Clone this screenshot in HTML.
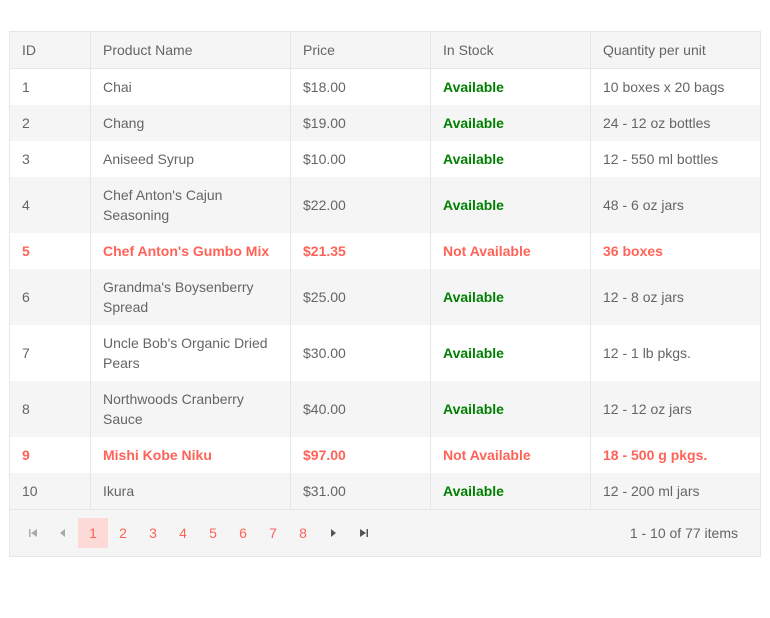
<!DOCTYPE html>
<html><head><style>
body{margin:0;background:#fff;font-family:"Liberation Sans",sans-serif;font-size:14px;color:#656565}
.g{position:absolute;left:9px;top:31px;width:750px;border:1px solid #e6e6e6}
table{border-collapse:collapse;width:750px;table-layout:fixed}
td,th{padding:0 12px 0 12px;border-left:1px solid #e6e6e6;text-align:left;font-weight:normal;line-height:20px}
td+td,th+th{padding-left:12.5px}
td:first-child,th:first-child{border-left:none}
th{height:36px;background:#f5f5f5;border-bottom:1px solid #e6e6e6}
tr.a td{background:#fff}tr.b td{background:#f5f5f5}
.ok{color:#008000;font-weight:bold}
tr.r td{color:#ff6358;font-weight:bold}
.p{height:46px;background:#f5f5f5;border-top:1px solid #e6e6e6;position:relative}
.p span{position:absolute;top:8px;width:30px;height:30px;line-height:30px;text-align:center;color:#ff6358}
.p svg{position:absolute;top:19px}
.p .s{background:#fbdad7}
.info{position:absolute;right:22px;top:15px}
</style></head><body>
<div class="g">
<table>
<colgroup><col style="width:80px"><col style="width:200px"><col style="width:140px"><col style="width:160px"><col style="width:170px"></colgroup>
<tr><th>ID</th><th>Product Name</th><th>Price</th><th>In Stock</th><th>Quantity per unit</th></tr>
<tr class="a" style="height:36px"><td>1</td><td>Chai</td><td>$18.00</td><td class="ok">Available</td><td>10 boxes x 20 bags</td></tr>
<tr class="b" style="height:36px"><td>2</td><td>Chang</td><td>$19.00</td><td class="ok">Available</td><td>24 - 12 oz bottles</td></tr>
<tr class="a" style="height:36px"><td>3</td><td>Aniseed Syrup</td><td>$10.00</td><td class="ok">Available</td><td>12 - 550 ml bottles</td></tr>
<tr class="b" style="height:56px"><td>4</td><td>Chef Anton's Cajun Seasoning</td><td>$22.00</td><td class="ok">Available</td><td>48 - 6 oz jars</td></tr>
<tr class="a r" style="height:36px"><td>5</td><td>Chef Anton's Gumbo Mix</td><td>$21.35</td><td>Not Available</td><td>36 boxes</td></tr>
<tr class="b" style="height:56px"><td>6</td><td>Grandma's Boysenberry Spread</td><td>$25.00</td><td class="ok">Available</td><td>12 - 8 oz jars</td></tr>
<tr class="a" style="height:56px"><td>7</td><td>Uncle Bob's Organic Dried Pears</td><td>$30.00</td><td class="ok">Available</td><td>12 - 1 lb pkgs.</td></tr>
<tr class="b" style="height:56px"><td>8</td><td>Northwoods Cranberry Sauce</td><td>$40.00</td><td class="ok">Available</td><td>12 - 12 oz jars</td></tr>
<tr class="a r" style="height:36px"><td>9</td><td>Mishi Kobe Niku</td><td>$97.00</td><td>Not Available</td><td>18 - 500 g pkgs.</td></tr>
<tr class="b" style="height:36px"><td>10</td><td>Ikura</td><td>$31.00</td><td class="ok">Available</td><td>12 - 200 ml jars</td></tr>
</table>
<div class="p">
<svg style="left:19px" width="8" height="8" viewBox="0 0 8 8"><rect x="0" y="0" width="1.5" height="8" fill="#aaa"/><path d="M8 0L2 4L8 8Z" fill="#aaa"/></svg>
<svg style="left:50px" width="5" height="8" viewBox="0 0 5 8"><path d="M5 0L0 4L5 8Z" fill="#aaa"/></svg>
<span class="s" style="left:68px">1</span>
<span style="left:98px">2</span>
<span style="left:128px">3</span>
<span style="left:158px">4</span>
<span style="left:188px">5</span>
<span style="left:218px">6</span>
<span style="left:248px">7</span>
<span style="left:278px">8</span>
<svg style="left:321px" width="5" height="8" viewBox="0 0 5 8"><path d="M0 0L5 4L0 8Z" fill="#555"/></svg>
<svg style="left:350px" width="8" height="8" viewBox="0 0 8 8"><path d="M0 0L6 4L0 8Z" fill="#555"/><rect x="6.5" y="0" width="1.5" height="8" fill="#555"/></svg>
<div class="info">1 - 10 of 77 items</div>
</div>
</div>
</body></html>
